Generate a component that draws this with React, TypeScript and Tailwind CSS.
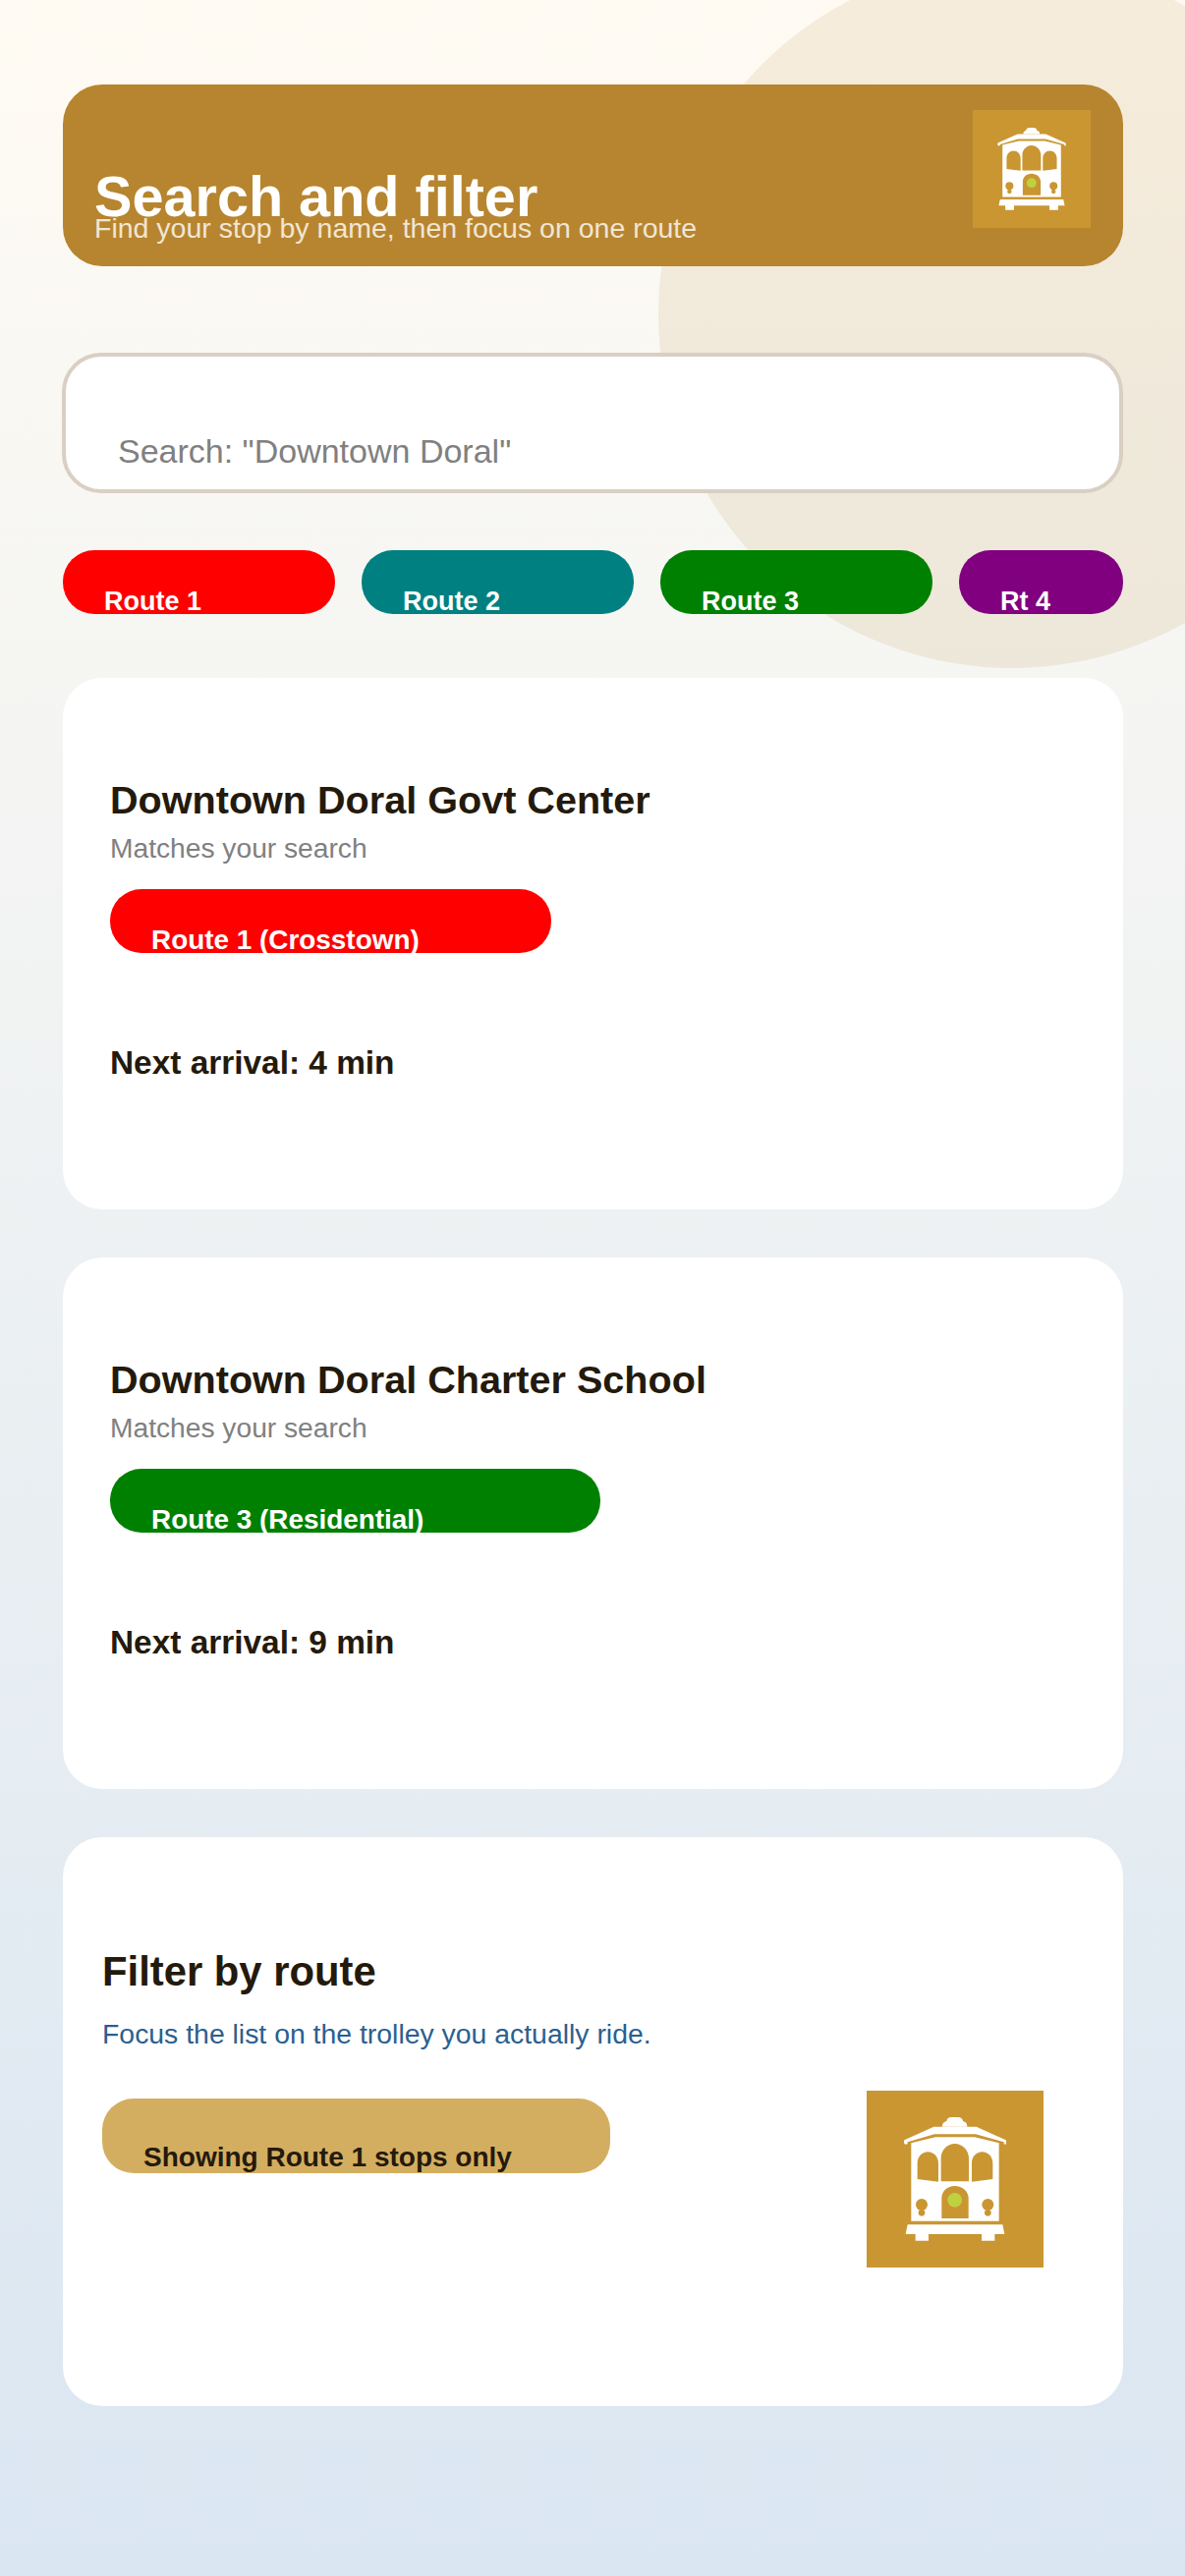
const font = { fontFamily: '"Liberation Sans", Arial, sans-serif' }

function Trolley({ className }: { className?: string }) {
  return (
    <svg viewBox="0 0 540 540" className={className}>
      <rect width="540" height="540" fill="#c99632" />
      <path d="M231 110c0-7 2-14 13-17 1-8 7-12 14-12h22c7 0 13 4 14 12 11 3 13 10 13 17z" fill="#fff" />
      <path d="M115 151l90-41h130l90 41c2 1 1 3 1 6v5c0 2-2 2-3 2-3 0-4-1-4-4v-3l-86-24H207l-82 24v3c0 3-2 4-5 4s-6-2-6-5v-6z" fill="#fff" />
      <path d="M136 160l74-18h120l74 18v238H136z" fill="#fff" />
      <path d="M155 270v-48c0-20 14-35 32-35s32 15 32 35v56zM227 277v-71c0-24 19-44 42-44s43 20 43 44v71zM321 278v-56c0-20 14-35 32-35s32 15 32 35v48zM229 390v-62c0-21 18-37 40-37s42 16 42 37v62z" fill="#c99632" />
      <circle cx="269" cy="334" r="22" fill="#bfd13f" />
      <circle cx="168" cy="348" r="18" fill="#c99632" />
      <circle cx="168" cy="373" r="10" fill="#c99632" />
      <circle cx="370" cy="348" r="18" fill="#c99632" />
      <circle cx="370" cy="373" r="10" fill="#c99632" />
      <path d="M125 409h290l6 29h-30v20h-40v-20H189v20h-40v-20h-30z" fill="#fff" />
    </svg>
  )
}

function Chip({ label, color, className }: { label: string; color: string; className: string }) {
  return (
    <div className={`h-[65px] rounded-[32px] overflow-hidden pl-[42px] pt-[36px] leading-[32px] font-bold text-white whitespace-nowrap ${color} ${className}`}>
      {label}
    </div>
  )
}

function StopCard({ name, chip, chipColor, chipWidth, eta }: { name: string; chip: string; chipColor: string; chipWidth: string; eta: string }) {
  return (
    <div className="h-[541px] rounded-[40px] bg-white pl-[48px] pt-[101px]">
      <h2 className="text-[39.6px] leading-[46px] font-bold text-[#241a0c]">{name}</h2>
      <p className="mt-[10px] text-[28.2px] leading-[32px] text-[#808080]">Matches your search</p>
      <Chip label={chip} color={chipColor} className={`mt-[26px] text-[27.9px] ${chipWidth}`} />
      <p className="mt-[92px] text-[33.4px] leading-[40px] font-bold text-[#241a0c]">{eta}</p>
    </div>
  )
}

export default function App() {
  return (
    <div style={font} className="relative h-[2622px] w-[1206px] overflow-hidden bg-gradient-to-b from-[#fffbf3] to-[#dae6f2]">
      <div className="absolute left-[670px] top-[-40px] h-[720px] w-[720px] rounded-full bg-[#b7852f]/12" />
      <div className="relative pl-[64px] pr-[63px] pt-[86px]">
        <header className="flex h-[185px] justify-between rounded-[40px] bg-[#b7852f] pl-[32px] pr-[33px] pt-[26px]">
          <div className="pt-[56px]">
            <h1 className="text-[57.6px] leading-[64px] font-bold text-white">Search and filter</h1>
            <p className="mt-[-17px] text-[28.5px] leading-[34px] text-[#f1e6d4]">Find your stop by name, then focus on one route</p>
          </div>
          <Trolley className="h-[120px] w-[120px]" />
        </header>

        <div className="mt-[88px] ml-[-1px] h-[143px] rounded-[40px] border-[4px] border-[#d9cfc3] bg-white pl-[53px] pt-[76px] text-[34px] leading-[40px] text-[#808080]">
          Search: "Downtown Doral"
        </div>

        <div className="mt-[58px] flex gap-[27px] text-[27px]">
          <Chip label="Route 1" color="bg-[#ff0000]" className="w-[277px]" />
          <Chip label="Route 2" color="bg-[#008080]" className="w-[277px]" />
          <Chip label="Route 3" color="bg-[#008000]" className="w-[277px]" />
          <Chip label="Rt 4" color="bg-[#800080]" className="w-[167px]" />
        </div>

        <div className="mt-[65px] flex flex-col gap-[49px]">
          <StopCard name="Downtown Doral Govt Center" chip="Route 1 (Crosstown)" chipColor="bg-[#ff0000]" chipWidth="w-[449px]" eta="Next arrival: 4 min" />
          <StopCard name="Downtown Doral Charter School" chip="Route 3 (Residential)" chipColor="bg-[#008000]" chipWidth="w-[499px]" eta="Next arrival: 9 min" />

          <div className="flex h-[579px] justify-between rounded-[40px] bg-white pl-[40px] pr-[81px] pt-[113px]">
            <div>
              <h2 className="text-[41.8px] leading-[48px] font-bold text-[#241a0c]">Filter by route</h2>
              <p className="mt-[22px] text-[28.4px] leading-[34px] text-[#2c5f8f]">Focus the list on the trolley you actually ride.</p>
              <div className="mt-[49px] h-[76px] w-[517px] overflow-hidden rounded-[32px] bg-[#d4ae60] pl-[42px] pt-[44px] text-[28px] leading-[32px] font-bold text-[#241a0c] whitespace-nowrap">
                Showing Route 1 stops only
              </div>
            </div>
            <Trolley className="mt-[145px] h-[180px] w-[180px]" />
          </div>
        </div>
      </div>
    </div>
  )
}
